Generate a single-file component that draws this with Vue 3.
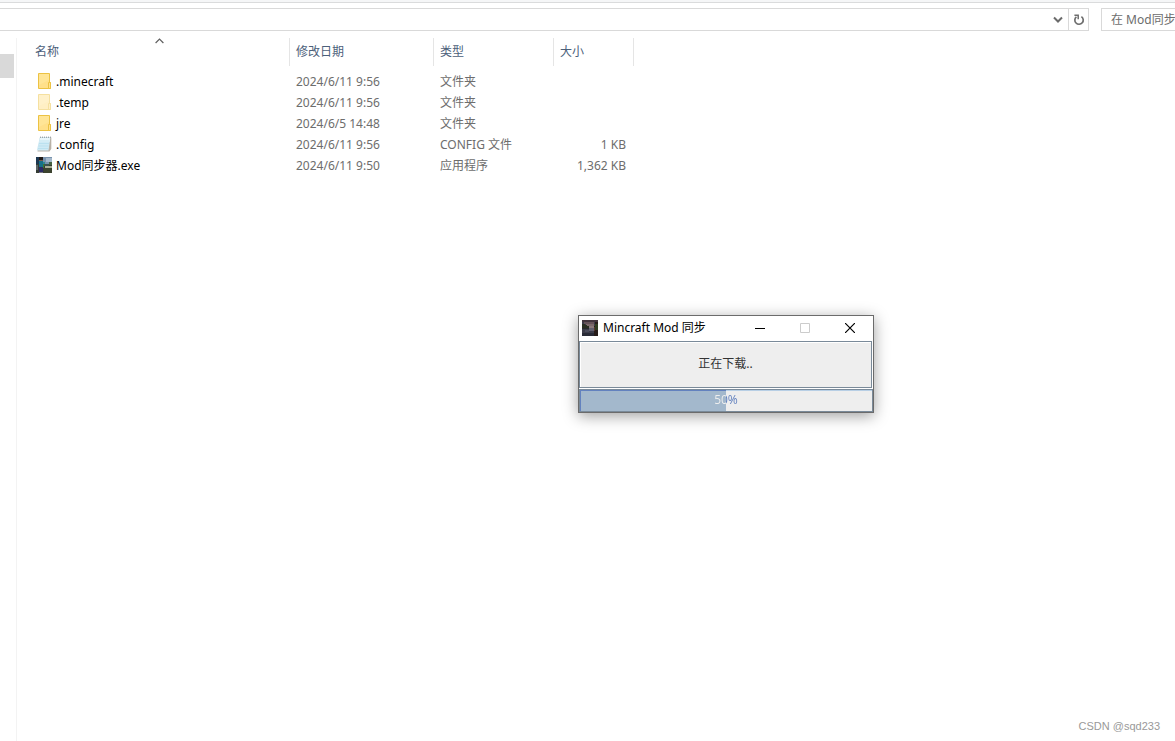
<script setup>
import { ref } from 'vue'

const columns = [
  { key: 'name', label: '名称' },
  { key: 'date', label: '修改日期' },
  { key: 'type', label: '类型' },
  { key: 'size', label: '大小' },
]
const files = [
  { name: '.minecraft', date: '2024/6/11 9:56', type: '文件夹', size: '', icon: 'folder' },
  { name: '.temp', date: '2024/6/11 9:56', type: '文件夹', size: '', icon: 'hidden' },
  { name: 'jre', date: '2024/6/5 14:48', type: '文件夹', size: '', icon: 'folder' },
  { name: '.config', date: '2024/6/11 9:56', type: 'CONFIG 文件', size: '1 KB', icon: 'note' },
  { name: 'Mod同步器.exe', date: '2024/6/11 9:50', type: '应用程序', size: '1,362 KB', icon: 'app' },
]
const address = ref('')
const query = ref('')
const percent = ref(50)
</script>

<template>
  <div class="explorer">
    <div class="ribbon-edge"></div>
    <header class="toolbar">
      <div class="address">
        <input v-model="address" class="address-input" type="text" aria-label="地址" />
        <button class="drop" type="button" aria-label="以前的位置">
          <svg width="10" height="8" viewBox="0 0 10 8"><path d="M1 1.5 5 5.5 9 1.5" fill="none" stroke="#6b6b6b" stroke-width="2" /></svg>
        </button>
        <button class="reload" type="button" aria-label="刷新">
          <svg width="12" height="12" viewBox="0 0 12 12">
            <path d="M8.4 2.6A4.2 4.2 0 1 1 3.4 2.8" fill="none" stroke="#6e6e6e" stroke-width="1.7" />
            <path d="M1.4 1.3H5.2V5.2" fill="none" stroke="#6e6e6e" stroke-width="1.5" />
          </svg>
        </button>
      </div>
      <input v-model="query" class="search" type="search" placeholder="在 Mod同步" aria-label="搜索" />
    </header>

    <div class="body">
      <nav class="tree"><div class="tree-selected"></div></nav>
      <main class="list">
        <table>
          <colgroup>
            <col class="col-name" /><col class="col-date" /><col class="col-type" /><col class="col-size" /><col />
          </colgroup>
          <thead>
            <tr>
              <th v-for="c in columns" :key="c.key" scope="col" :aria-sort="c.key === 'name' ? 'ascending' : 'none'">
                <button type="button" class="sort">{{ c.label }}</button>
                <svg v-if="c.key === 'name'" class="arrow" width="9" height="6" viewBox="0 0 9 6"><path d="M.6 5 4.5 1.1 8.4 5" fill="none" stroke="#5f5f5f" stroke-width="1.2" /></svg>
              </th>
              <td></td>
            </tr>
          </thead>
          <tbody>
            <tr v-for="f in files" :key="f.name">
              <td class="name">
                <span class="name-cell">
                  <svg v-if="f.icon === 'folder' || f.icon === 'hidden'" :class="{ faded: f.icon === 'hidden' }" width="16" height="16" viewBox="0 0 16 16">
                    <path d="M2.5.5h11v9h1v6h-12z" fill="#ffe08a" stroke="#ecc243" />
                    <path d="M3 1h10v6L3 12z" fill="#ffe596" />
                    <path d="M12.5 9.5h2v6h-2z" fill="#ffe38f" stroke="#ecc243" />
                  </svg>
                  <svg v-else-if="f.icon === 'note'" width="16" height="16" viewBox="0 0 16 16">
                    <path d="M4 1.5h11.3v11.2L13.5 15.5H1.5z" fill="#b9b2a8" />
                    <path d="M3.8 1.2h10.6L12.5 14.4H.8z" fill="#cfeaf5" />
                    <path d="M4 2h10l-.5 4H3.2z" fill="#e8f6fb" />
                    <path d="M3.3 5h10M3 7.5h10M2.5 10h10M2 12.5h10" stroke="#b2dcec" stroke-width=".7" />
                    <path d="M4 1.2h11" stroke="#858c90" stroke-width="1" stroke-dasharray="1 1" />
                  </svg>
                  <svg v-else width="16" height="16" viewBox="0 0 16 16" shape-rendering="crispEdges">
                    <path d="M0 0h16v16H0z" fill="#353c35" />
                    <path d="M0 0h3v7H0z" fill="#1d3852" /><path d="M7 0h9v7H7z" fill="#7893ae" />
                    <path d="M10 1h6v4h-6z" fill="#a3b7ca" /><path d="M13 5h3v3h-3z" fill="#456141" />
                    <path d="M8 7h5v2H8z" fill="#3b5250" /><path d="M9 9h7v2H9z" fill="#a9ae96" />
                    <path d="M8 11h8v5H8z" fill="#3c432f" />
                    <path d="M3 0h4v3H3z" fill="#211c1a" /><path d="M3 3h4v1H3z" fill="#7c5c49" />
                    <path d="M3 4h4v6H3z" fill="#177088" /><path d="M7 5h2v2H7z" fill="#2d8791" />
                    <path d="M3 10h4v5H3z" fill="#2d2a64" /><path d="M0 8h2v5H0z" fill="#5d6668" />
                    <path d="M7 7h1v4H7z" fill="#3f7a2c" />
                    <path d="M3 15h4v1H3z" fill="#77777b" />
                  </svg>
                  <span>{{ f.name }}</span>
                </span>
              </td>
              <td>{{ f.date }}</td>
              <td>{{ f.type }}</td>
              <td class="size">{{ f.size }}</td>
              <td></td>
            </tr>
          </tbody>
        </table>
      </main>
    </div>

    <section class="dialog" role="dialog" aria-labelledby="dialog-title">
      <div class="titlebar">
        <svg width="16" height="16" viewBox="0 0 16 16" shape-rendering="crispEdges">
          <path d="M0 0h16v16H0z" fill="#3c3c49" />
          <path d="M0 0h16v2H0z" fill="#43353e" /><path d="M2 2h10v2H2z" fill="#66535a" />
          <path d="M4 4h8v2H4z" fill="#7d6a6c" /><path d="M6 6h6v2H6z" fill="#8a7a7c" />
          <path d="M0 4h3v1h2v1h2v2H0z" fill="#2a2e22" />
          <path d="M0 8h7v1H0z" fill="#282a2e" /><path d="M7 8h5v3H7z" fill="#615f6f" />
          <path d="M3 10h4v2H3z" fill="#4b4c5c" /><path d="M0 13h12v3H0z" fill="#292b37" />
          <path d="M13 2h3v14h-4V6h1z" fill="#271c19" /><path d="M13 4h3v6h-3z" fill="#2f3c22" />
          <path d="M12 7h1v4h-1z" fill="#54352c" />
        </svg>
        <span id="dialog-title" class="title">Mincraft Mod 同步</span>
        <button type="button" aria-label="最小化"><svg width="10" height="10" viewBox="0 0 10 10"><path d="M0 5.5h10" stroke="#000" /></svg></button>
        <button type="button" aria-label="最大化" disabled><svg width="10" height="10" viewBox="0 0 10 10"><path d="M.5.5h9v9h-9z" fill="none" stroke="#ccc" /></svg></button>
        <button type="button" aria-label="关闭"><svg width="10" height="10" viewBox="0 0 10 10"><path d="M0 0 10 10M10 0 0 10" stroke="#000" stroke-width="1.2" /></svg></button>
      </div>
      <div class="message">正在下载..</div>
      <div class="bar" role="progressbar" aria-label="下载进度" :aria-valuenow="percent" aria-valuemin="0" aria-valuemax="100">
        <div class="fill" :style="{ width: percent + '%' }"></div>
        <span class="percent">{{ percent }}%</span>
      </div>
    </section>

    <footer class="credit">CSDN @sqd233</footer>
  </div>
</template>

<style>
html, body { background: #fff; overflow: hidden; }
</style>

<style scoped>
* { box-sizing: border-box; }
.explorer {
  position: relative;
  display: flex;
  flex-direction: column;
  min-height: 100vh;
  overflow: hidden;
  font: 12px/20px "Noto Sans", "Noto Sans CJK SC", sans-serif;
  color: #6d6d6d;
}
button { padding: 0; border: 0; background: none; font: inherit; color: inherit; }
input { min-width: 0; border: 0; border-radius: 0; outline: 0; background: #fff; font: inherit; color: inherit; }
svg { display: block; flex: none; }
.ribbon-edge { height: 3px; background: #f5f6f7; border-bottom: 1px solid #dadbdc; }
.toolbar { display: flex; gap: 12px; height: 28px; padding-top: 5px; }
.address { display: flex; flex: 1; border: 1px solid #d9d9d9; border-left: 0; }
.address-input { flex: 1; }
.drop, .reload { display: flex; align-items: center; justify-content: center; width: 20px; }
.reload { border-left: 1px solid #d9d9d9; }
.search { flex: none; width: 104px; margin-right: -30px; padding: 0 0 0 9px; border: 1px solid #d9d9d9; border-right: 0; appearance: none; }
.search::placeholder { color: #6d6d6d; opacity: 1; }
.body { display: flex; flex: 1; padding-top: 7px; }
.tree { width: 17px; padding: 16px 2px 0 0; border-right: 1px solid #f3f3f3; }
.tree-selected { height: 24px; background: #d9d9d9; }
.list { flex: 1; padding-left: 12px; }
table { width: 100%; border-spacing: 0; table-layout: fixed; }
.col-name { width: 261px; }
.col-date { width: 144px; }
.col-type { width: 120px; }
.col-size { width: 80px; }
th { position: relative; height: 28px; padding: 0 6px; border-right: 1px solid #e5e5e5; text-align: left; font-weight: 400; color: #4c607a; }
.sort { display: block; width: 100%; text-align: left; }
.arrow { position: absolute; top: 0; left: 126px; }
tbody::before { content: ""; display: block; height: 5px; }
tbody td { height: 21px; padding: 0 8px 0 6px; white-space: nowrap; }
tbody td.name { padding-left: 7px; color: #000; }
.name-cell { display: flex; align-items: center; gap: 4px; }
.name-cell svg { margin-bottom: 2px; }
.faded { opacity: .5; }
.size { text-align: right; }
.dialog {
  position: absolute;
  top: 315px;
  left: 578px;
  width: 296px;
  border: 1px solid #6b6b6b;
  background: #fff;
  box-shadow: 0 3px 14px rgba(0, 0, 0, .38);
}
.titlebar { display: flex; align-items: center; height: 25px; padding: 0 1px 1px 3px; color: #000; }
.title { flex: 1; padding-left: 5px; white-space: nowrap; }
.titlebar button { display: flex; align-items: center; justify-content: center; width: 45px; height: 24px; }
.message {
  height: 47px;
  margin-right: 1px;
  border: 1px solid #7a8a99;
  background: #eee;
  box-shadow: inset 1px 1px #fff, 1px 1px #fff;
  line-height: 44px;
  text-align: center;
  color: #333;
}
.bar { position: relative; height: 23px; margin-top: 1px; border: 1px solid #7a8a99; background: #eee; box-shadow: inset 0 1px #b8cfe5; }
.fill { height: 100%; background: #a3b8cc; box-shadow: inset 1px 1px #6382bf; }
.percent {
  position: absolute;
  inset: 0;
  line-height: 20px;
  text-align: center;
  color: transparent;
  background: linear-gradient(90deg, #eee 50%, #6382bf 50%);
  background-clip: text;
}
.credit { position: absolute; right: 15px; bottom: 5px; font: 11px/20px "Liberation Sans", Arial, sans-serif; color: #999; }
</style>
